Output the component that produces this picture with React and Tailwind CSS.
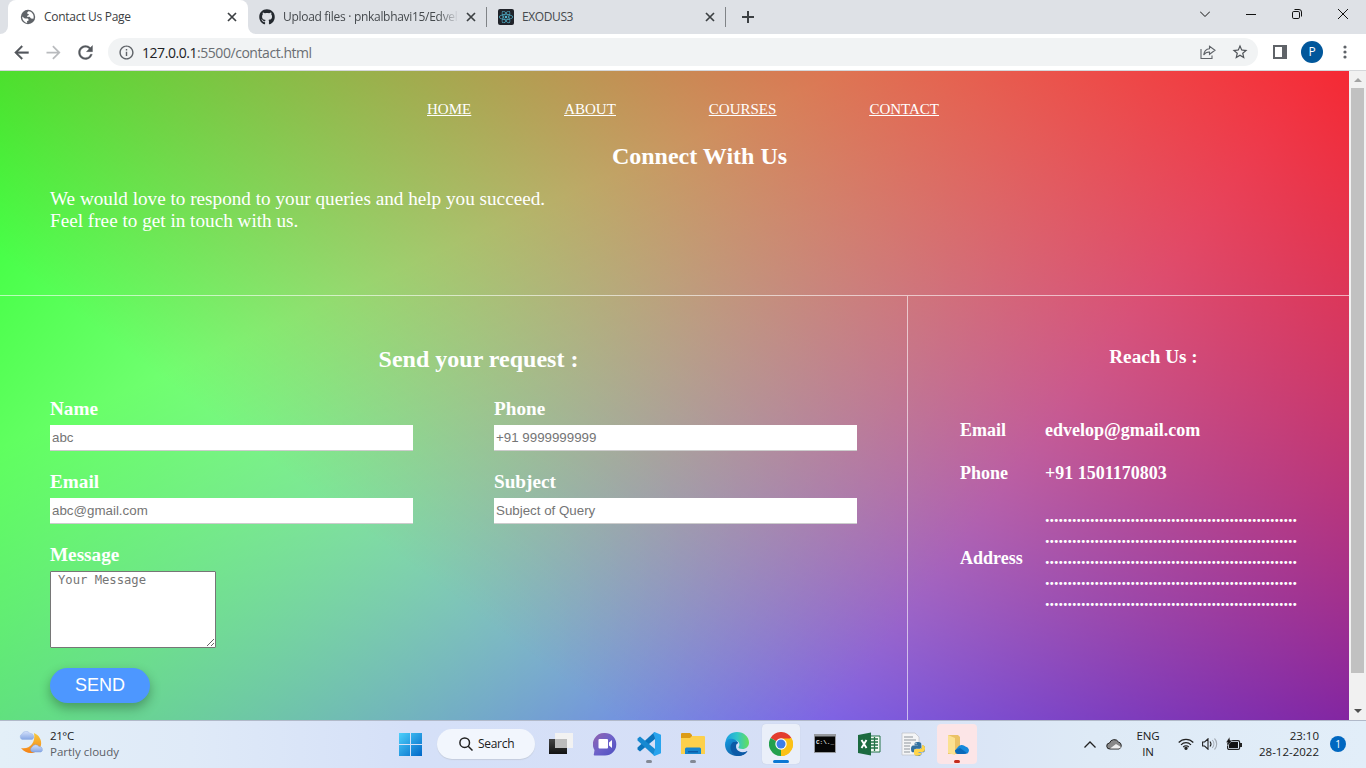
import React from "react";
import { FaGithub, FaReact, FaPython } from "react-icons/fa";
import { MdArrowForward, MdInfoOutline, MdStarBorder } from "react-icons/md";

const ADDRESS_LINE = ".".repeat(56);

function Close({ className }) {
  return (
    <svg className={className} width="10" height="10" viewBox="0 0 10 10" fill="none" stroke="#3c4043" strokeWidth="1.7">
      <path d="M1 1l8 8M9 1l-8 8" />
    </svg>
  );
}

function Globe() {
  return (
    <svg width="16" height="16" viewBox="0 0 16 16">
      <circle cx="8" cy="8" r="7.2" fill="#5f6368" />
      <path d="M2.2 7.6L4.8 9.4 8 9.6 8.8 11.2 7 12.2 7.2 14C4.4 13.6 2.2 11 2.2 7.600zM8.600 2.200C7 3.200 6.600 4.400 8 5 9.400 5 9.200 6.200 7.600 6.600L7 8 9.600 7.800 11 9.600 13.400 9.800C14.400 7 13 3.600 10 2.400z" fill="#fff" />
    </svg>
  );
}

function TabStrip() {
  return (
    <div className="flex h-[34px] shrink-0 bg-[#dee1e6] text-[12px] text-[#45494d]">
      <div className="flex w-2 items-end bg-white">
        <div className="h-full w-2 rounded-br-lg bg-[#dee1e6]" />
      </div>
      <div className="flex w-[240px] items-center rounded-t-lg bg-white pl-3">
        <Globe />
        <span className="ml-2 w-[183px] whitespace-nowrap tracking-[-0.28px] text-[#3c4043]">Contact Us Page</span>
        <Close />
      </div>
      <div className="flex w-[238px] bg-white">
        <div className="flex w-full items-center rounded-bl-lg bg-[#dee1e6] pl-[11px]">
          <FaGithub size={16} color="#24292f" />
          <span className="ml-2 w-[176px] whitespace-nowrap tracking-[-0.3px] [mask-image:linear-gradient(to_right,black_88%,transparent)]">
            Upload files · pnkalbhavi15/Edvel
          </span>
          <Close className="ml-[7px]" />
        </div>
      </div>
      <div className="flex w-[240px] items-center">
        <div className="h-5 w-px bg-[#808387]" />
        <div className="ml-[11px] flex size-4 items-center justify-center rounded-[2px] bg-[#20232a]">
          <FaReact size={14} color="#53b9d3" />
        </div>
        <span className="ml-2 w-[183px] tracking-[-0.4px]">EXODUS3</span>
        <Close />
        <div className="ml-[10px] h-5 w-px bg-[#808387]" />
      </div>
      <div className="flex flex-1 items-center pl-[16px]">
        <svg width="12" height="12" viewBox="0 0 12 12" stroke="#3c4043" strokeWidth="2"><path d="M6 0v12M0 6h12" /></svg>
      </div>
      <div className="flex items-center pb-[6px] pr-[18px]">
        <svg className="mr-[36px]" width="10" height="6" viewBox="0 0 10 6" fill="none" stroke="#111"><path d="M0 .5L5 5.500 10 .5" /></svg>
        <svg className="mr-[36px]" width="10" height="10" viewBox="0 0 10 10" stroke="#111"><path d="M0 5.500h10" /></svg>
        <svg className="mr-[36px]" width="10" height="10" viewBox="0 0 10 10" fill="none" stroke="#111">
          <rect x=".5" y="2.500" width="7" height="7" rx="1.300" />
          <path d="M2.500 .5H7Q9.500 .5 9.500 3V7.500" />
        </svg>
        <svg width="10" height="10" viewBox="0 0 10 10" stroke="#111"><path d="M0 0l10 10M10 0L0 10" /></svg>
      </div>
    </div>
  );
}

function Toolbar() {
  return (
    <div className="flex h-[37px] shrink-0 items-center border-b border-[#d5d7da] bg-white pl-[11px]">
      <svg width="21" height="21" viewBox="0 0 24 24" fill="#53575c" stroke="#53575c" strokeWidth=".4">
        <path d="M20 11H7.830l5.590-5.590L12 4l-8 8 8 8 1.410-1.410L7.830 13H20v-2z" />
      </svg>
      <MdArrowForward className="ml-[11px]" size={21} color="#b9bbbe" />
      <svg className="ml-[11px]" width="21" height="21" viewBox="0 0 24 24" fill="#53575c" stroke="#53575c" strokeWidth=".4">
        <path d="M17.650 6.350A7.958 7.958 0 0012 4c-4.420 0-7.990 3.580-7.990 8s3.570 8 7.990 8c3.730 0 6.840-2.550 7.730-6h-2.080A5.990 5.990 0 0112 18c-3.310 0-6-2.690-6-6s2.690-6 6-6c1.660 0 3.140.69 4.220 1.780L13 11h7V4l-2.350 2.350z" />
      </svg>
      <div className="ml-[12px] flex h-7 w-[1150px] items-center rounded-full bg-[#f1f3f4] pl-[10px]">
        <MdInfoOutline size={17} color="#5f6368" />
        <span className="ml-[7px] flex-1 text-[14px] tracking-[-0.45px] text-[#6a6e73]">
          <span className="text-[#202124]">127.0.0.1</span>:5500/contact.html
        </span>
        <svg className="mr-[15px]" width="16" height="15" viewBox="0 0 16 15" fill="none" stroke="#5f6368" strokeWidth="1.100">
          <path d="M1 4v9.500h11V10.500" />
          <path d="M9.500 1.300L15 5.300 9.500 9.300V7C6.500 6.800 5 8 3.700 10 4 6.500 6 4 9.500 3.700z" />
        </svg>
        <MdStarBorder className="mr-[9px]" size={18} color="#4f5358" />
      </div>
      <svg className="ml-[15px]" width="14" height="14" viewBox="0 0 14 14"><path d="M0 0h14v14H0zM2 2v10h7V2z" fill="#5f6368" fillRule="evenodd" /></svg>
      <div className="ml-[14px] flex size-[22px] items-center justify-center rounded-full bg-[#01579b] text-[12px] text-white">P</div>
      <svg className="ml-[19.5px]" width="4" height="14" viewBox="0 0 4 14" fill="#5f6368"><circle cx="2" cy="2" r="1.600" /><circle cx="2" cy="7" r="1.600" /><circle cx="2" cy="12" r="1.600" /></svg>
    </div>
  );
}

function Field({ label, placeholder }) {
  return (
    <label className="flex w-[363px] flex-col text-[19.2px] font-bold leading-[22px]">
      {label}
      <input
        placeholder={placeholder}
        className="mt-[5px] h-[26px] border-b border-[#ccc] bg-white px-[2px] font-['Liberation_Sans',sans-serif] text-[13.333px] font-normal placeholder:text-[#757575]"
      />
    </label>
  );
}

function ContactPage() {
  return (
    <div className="h-[649px] w-[1349px] overflow-hidden bg-[linear-gradient(217deg,rgba(255,0,0,.8),rgba(255,0,0,0)_70.71%),linear-gradient(127deg,rgba(0,255,0,.8),rgba(0,255,0,0)_70.71%),linear-gradient(336deg,rgba(0,0,255,.8),rgba(0,0,255,0)_70.71%)] bg-[length:1349px_684px] bg-no-repeat font-['Liberation_Serif',serif] text-white">
      <header className="flex h-[225px] flex-col border-b border-white/60">
        <nav className="ml-[427px] flex gap-[93px] pt-[29px] text-[15px] leading-[18px] underline">
          <a>HOME</a>
          <a>ABOUT</a>
          <a>COURSES</a>
          <a>CONTACT</a>
        </nav>
        <h2 className="ml-[50px] mt-[24px] text-center text-[24px] font-bold leading-[28px]">Connect With Us</h2>
        <p className="ml-[50px] mt-[18px] text-[19.2px] leading-[22px]">
          We would love to respond to your queries and help you succeed.
          <br />
          Feel free to get in touch with us.
        </p>
      </header>
      <div className="flex h-[460px]">
        <form className="flex w-[908px] flex-col border-r border-white/60 pl-[50px] pt-[49px]">
          <h2 className="text-center text-[24px] font-bold leading-[28px]">Send your request :</h2>
          <div className="mt-[25px] grid grid-cols-[363px_363px] gap-x-[81px] gap-y-[20px]">
            <Field label="Name" placeholder="abc" />
            <Field label="Phone" placeholder="+91 9999999999" />
            <Field label="Email" placeholder="abc@gmail.com" />
            <Field label="Subject" placeholder="Subject of Query" />
          </div>
          <label className="mt-[20px] flex flex-col text-[19.2px] font-bold leading-[22px]">
            Message
            <textarea
              placeholder="Your Message"
              className="mt-[5px] h-[77px] w-[166px] resize rounded-[1px] border border-[#767676] bg-white px-[7px] font-['DejaVu_Sans_Mono',monospace] text-[12.200px] font-normal leading-[16px] placeholder:text-[#757575]"
            />
          </label>
          <button type="button" className="mt-[20px] h-[35px] w-[100px] rounded-full bg-[#4d97ff] pb-[1px] font-['Liberation_Sans',sans-serif] text-[18px] shadow-[0_5px_12px_rgba(0,0,0,0.3)]">
            SEND
          </button>
        </form>
        <section className="flex-1 pt-[50px] font-bold">
          <h3 className="ml-[50px] text-center text-[19.2px] leading-[22px]">Reach Us :</h3>
          <dl className="ml-[52px] mt-[52px] grid grid-cols-[85px_252px] items-center text-[18px] leading-[21px]">
            <dt>Email</dt>
            <dd>edvelop@gmail.com</dd>
            <dt className="mt-[22px]">Phone</dt>
            <dd className="mt-[22px]">+91 1501170803</dd>
            <dt className="mt-[22px]">Address</dt>
            <dd className="mt-[22px]">
              {[0, 1, 2, 3, 4].map((n) => (
                <div key={n}>{ADDRESS_LINE}</div>
              ))}
            </dd>
          </dl>
        </section>
      </div>
    </div>
  );
}

function Scrollbar() {
  return (
    <div className="flex w-[17px] flex-col items-center bg-[#f1f1f1]">
      <div className="flex h-[17px] items-center"><svg width="8" height="4" viewBox="0 0 8 4"><path d="M0 4L4 0l4 4z" fill="#a3a3a3" /></svg></div>
      <div className="h-[585px] w-[13px] bg-[#c1c1c1]" />
      <div className="mt-auto flex h-[17px] items-center pb-[1px]"><svg width="8" height="4" viewBox="0 0 8 4"><path d="M0 0l4 4 4-4z" fill="#505050" /></svg></div>
    </div>
  );
}

function TaskIcon({ children, mark, tile }) {
  return (
    <div className="flex w-11 justify-center">
      <div className={`flex h-10 flex-col items-center rounded pt-[8px] ${tile || "w-10"}`}>
        <svg width="24" height="24" viewBox="0 0 24 24">{children}</svg>
        {mark && <div className={`mb-[1px] mt-auto h-[3px] rounded-full ${mark}`} />}
      </div>
    </div>
  );
}

function Taskbar() {
  return (
    <div className="flex h-12 shrink-0 items-center border-t border-[#b1b9c9] bg-[linear-gradient(90deg,#e3eff8_0%,#dfeaf8_14%,#d5e0f8_30%,#d6dff6_60%,#deeaf6_80%,#e2eef9_100%)] pb-[1px] text-[#202020]">
      <svg className="ml-[18px]" width="26" height="26" viewBox="0 0 26 26">
        <defs>
          <linearGradient id="moon" x2="0" y2="1"><stop stopColor="#f7c93d" /><stop offset="1" stopColor="#f58216" /></linearGradient>
          <linearGradient id="cloud" x2="0" y2="1"><stop stopColor="#d4e1fb" /><stop offset="1" stopColor="#86a7e4" /></linearGradient>
        </defs>
        <path d="M16 2C21 4 24 9 23 14 21 23 9 25 3 17 11 19 18 12 16 2z" fill="url(#moon)" />
        <path d="M4 8.500a3 3 0 010-5.500 4.500 4.500 0 018-.5 3.200 3.200 0 012 6z" fill="url(#cloud)" stroke="#8fade4" strokeWidth=".4" />
        <path d="M14 21a3 3 0 010-5 4 4 0 017-.5 3 3 0 012 5.500z" fill="url(#cloud)" stroke="#7b9fdc" strokeWidth=".5" />
      </svg>
      <div className="ml-[6px] w-[348px] text-[11.500px] leading-[16px]">
        <div className="tracking-[-0.4px]">21°C</div>
        <div className="text-[#5b6066]">Partly cloudy</div>
      </div>
      <svg className="ml-[1px]" width="23" height="23" viewBox="0 0 23 23">
        <defs><linearGradient id="win" x2="1" y2="1"><stop stopColor="#4dd0fb" /><stop offset="1" stopColor="#0067c8" /></linearGradient></defs>
        <path d="M0 0h11v11H0zM12 0h11v11H12zM0 12h11v11H0zM12 12h11v11H12z" fill="url(#win)" />
      </svg>
      <div className="ml-[15px] flex h-[30px] w-[98px] items-center rounded-full bg-[#f2f6fd] pl-[22px] text-[12px] tracking-[-0.3px] shadow-[0_1px_1px_#c5cddd]">
        <svg width="14" height="14" viewBox="0 0 14 14" fill="none" stroke="#202020" strokeWidth="1.500"><circle cx="5.700" cy="5.700" r="4.800" /><path d="M9.200 9.200l4.300 4.300" /></svg>
        <span className="ml-[5px]">Search</span>
      </div>
      <div className="ml-[4px] flex">
        <TaskIcon>
          <defs><linearGradient id="dark" x2="0" y2="1"><stop stopColor="#454545" /><stop offset="1" stopColor="#111" /></linearGradient></defs>
          <path d="M0 7h18v15H0z" fill="url(#dark)" />
          <path d="M6 1h18v15H6z" fill="#f2f2f2" /><path d="M6 7h12v9H6z" fill="#bcbcbc" />
        </TaskIcon>
        <TaskIcon>
          <defs><linearGradient id="chat" x2="1" y2="1"><stop stopColor="#9362ad" /><stop offset=".5" stopColor="#6d62c9" /><stop offset="1" stopColor="#4d4fc0" /></linearGradient></defs>
          <path d="M12 1a11.300 11.300 0 110 22.600H2C.7 23.600.5 22.500 1 21.500L1.500 18A11.300 11.300 0 0112 1z" fill="url(#chat)" />
          <rect x="5.500" y="7" width="9.500" height="9.500" rx="1" fill="#fff" /><path d="M16 10.500l3-2.500v8l-3-2.500z" fill="#fff" />
        </TaskIcon>
        <TaskIcon mark="w-[6px] bg-[#838995]">
          <path d="M17.500 0l-17 15.500v2L3 19.500 18 7z" fill="#0a74bd" />
          <path d="M17.500 24L.5 8.500v-2L3 4.500 18 17z" fill="#1689d1" />
          <path d="M17.500 0L24 2.800v18.400L17.500 24 16 22.500l2-3.500V5l-2-3.500z" fill="#28a4ee" />
        </TaskIcon>
        <TaskIcon mark="w-[6px] bg-[#838995]">
          <path d="M0 2q0-1 1-1h8l2 2v5H0z" fill="#dc9b16" />
          <path d="M0 6h9l2-2h12q1 0 1 1v17H0z" fill="#fcd04c" />
          <path d="M4 22v-5q0-1.500 1.500-1.500h13q1.500 0 1.500 1.500v5z" fill="#1685ce" /><path d="M7 19h10v1.500H7z" fill="#0a5ba8" />
        </TaskIcon>
        <TaskIcon>
          <defs>
            <linearGradient id="edgeTop" x2="1"><stop stopColor="#1b9de2" /><stop offset=".5" stopColor="#30c6c9" /><stop offset="1" stopColor="#65df58" /></linearGradient>
            <linearGradient id="edgeLow" x2="1" y2="1"><stop stopColor="#159ae0" /><stop offset="1" stopColor="#104a91" /></linearGradient>
          </defs>
          <path d="M.4 10.500C1.200 4 6 0 12 0c7 0 12 5 12 10.500 0 4-3 6.500-6.500 6.500-3 0-4.500-1-4-2 2-2 1-7-5-7C4 8 .4 10.500.4 13z" fill="url(#edgeTop)" />
          <path d="M0 12.500C.5 8 4 6 8 7c3 .5 5 2.500 5 4.500-6 0-3 10 4 9.500 2 0 4-1 5.500-2C20 23 16 24 12 24 5 24 0 19 0 12.500z" fill="url(#edgeLow)" />
          <path d="M8 10c-5 4-2 12 4 14 5 0 9-2 10.500-5-8 4-15-3-9.500-9z" fill="#0c5aa6" />
        </TaskIcon>
        <TaskIcon mark="w-[16px] bg-[#0a78d4]" tile="w-[38px] bg-[#eaeff9] shadow-[0_0_1px_#b8c0d0]">
          <path d="M12 12L1.600 6A12 12 0 0122.400 6z" fill="#e33b2e" />
          <path d="M12 12L22.400 6A12 12 0 0112 24z" fill="#fbc116" />
          <path d="M12 12V24A12 12 0 011.600 6z" fill="#23a04d" />
          <path d="M12 6.500H22.600A12 12 0 0112 24l5-9z" fill="#fbc116" />
          <circle cx="12" cy="12" r="5.700" fill="#fff" /><circle cx="12" cy="12" r="4.500" fill="#3e7ee8" />
        </TaskIcon>
        <TaskIcon>
          <path d="M1 2h22v19H1z" fill="#96999e" /><path d="M2 4.500h20V20H2z" fill="#050505" />
          <text x="3" y="11.500" fill="#eee" fontSize="6" fontWeight="bold" fontFamily="Liberation Mono">C:\._</text>
        </TaskIcon>
        <TaskIcon>
          <path d="M12 4h11v16H12z" fill="#f5fbf6" stroke="#237346" />
          <path d="M14 7h7M14 10h7M14 13h7M14 16h7M17.500 5v14" stroke="#237346" strokeWidth="1.300" />
          <path d="M1 3l13-2.500v23L1 21z" fill="#1c6a40" /><path d="M4.500 8l5 8M9.500 8l-5 8" stroke="#fff" strokeWidth="1.900" />
        </TaskIcon>
        <TaskIcon>
          <path d="M1 1h13l4 4v18H1z" fill="#f4f5f6" stroke="#bdc0c5" strokeWidth=".7" />
          <path d="M3 5h9M3 8h12M3 11h7M3 14h6M3 17h6M3 20h6" stroke="#8f959c" />
          <FaPython x="9" y="9" width="15" height="15" color="#32709f" />
          <path d="M21 13q3 0 3 3.500t-3 3.500h-3.500v1h3c0 3-6 4-7.500 1v-3q0-2 2-2h4q2 0 2-2z" fill="#ffd54c" />
        </TaskIcon>
        <TaskIcon mark="w-[6px] bg-[#c42b1c]" tile="w-10 bg-[#fce5e7]">
          <path d="M3 3h10l2 2v17H3z" fill="#ebc266" /><path d="M3 3l7 3v17l-7-2z" fill="#fbe191" />
          <path d="M12 21.500a4 4 0 01.5-6 5 5 0 018-1 4 4 0 012 7z" fill="#1689dc" /><path d="M10 18l5-2 7 5q-1 1-3 1h-6q-3 0-3-4z" fill="#0969b9" />
        </TaskIcon>
      </div>
      <div className="flex flex-1 items-center justify-end pr-[20px] text-[11.500px] leading-[16px]">
        <svg width="12" height="7" viewBox="0 0 12 7" fill="none" stroke="#222" strokeWidth="1.300"><path d="M.5 6.500L6 1l5.500 5.500" /></svg>
        <svg className="ml-[10px]" width="17" height="12" viewBox="0 0 17 12">
          <path d="M4 11a3 3 0 01-.5-6A5 5 0 0112.500 4 3.700 3.700 0 0113 11z" fill="#888" stroke="#222" />
          <path d="M4 10.500l6-4.500 5 3q-1 1.500-3 1.500z" fill="#eee" />
        </svg>
        <div className="ml-[12px] w-[26px] text-center tracking-[-0.2px]"><div>ENG</div><div>IN</div></div>
        <svg className="ml-[17px]" width="16" height="12" viewBox="0 0 16 12" fill="none" stroke="#222" strokeWidth="1.200">
          <path d="M.7 4.500a10 10 0 0114.600 0M3 6.800a7 7 0 0110 0M5.200 9a4 4 0 015.600 0" /><circle cx="8" cy="10.300" r="1.100" fill="#222" />
        </svg>
        <svg className="ml-[8px]" width="16" height="12" viewBox="0 0 16 12" fill="none" stroke="#222" strokeWidth="1.100">
          <path d="M.6 4h2L6 .8v10.400L2.600 8h-2z" /><path d="M8 3.500a4 4 0 010 5" /><path d="M10.300 2a6 6 0 010 8M12.500.5a8 8 0 010 11" stroke="#a3aab3" />
        </svg>
        <svg className="mb-[2px] ml-[8px]" width="16" height="13" viewBox="0 0 16 13">
          <rect x="1.600" y="3.600" width="12" height="8.800" rx="1.500" fill="none" stroke="#222" strokeWidth="1.200" />
          <path d="M3 5h9v6H3z" fill="#111" /><path d="M14 6h2v4h-2z" fill="#222" /><path d="M3.500 0L0 5.500h2L1.500 9 6 3.500H4z" fill="#111" stroke="#e2edf8" strokeWidth=".4" />
        </svg>
        <div className="ml-[12px] w-[65px] whitespace-nowrap text-right"><div>23:10</div><div>28-12-2022</div></div>
        <div className="ml-[11px] flex size-4 items-center justify-center rounded-full bg-[#0067c0] text-[10px] text-white">1</div>
      </div>
    </div>
  );
}

export default function App() {
  return (
    <div className="flex h-[768px] w-[1366px] flex-col overflow-hidden bg-white font-['Open_Sans','Noto_Sans',sans-serif]">
      <TabStrip />
      <Toolbar />
      <main className="flex h-[649px] shrink-0">
        <ContactPage />
        <Scrollbar />
      </main>
      <Taskbar />
    </div>
  );
}
